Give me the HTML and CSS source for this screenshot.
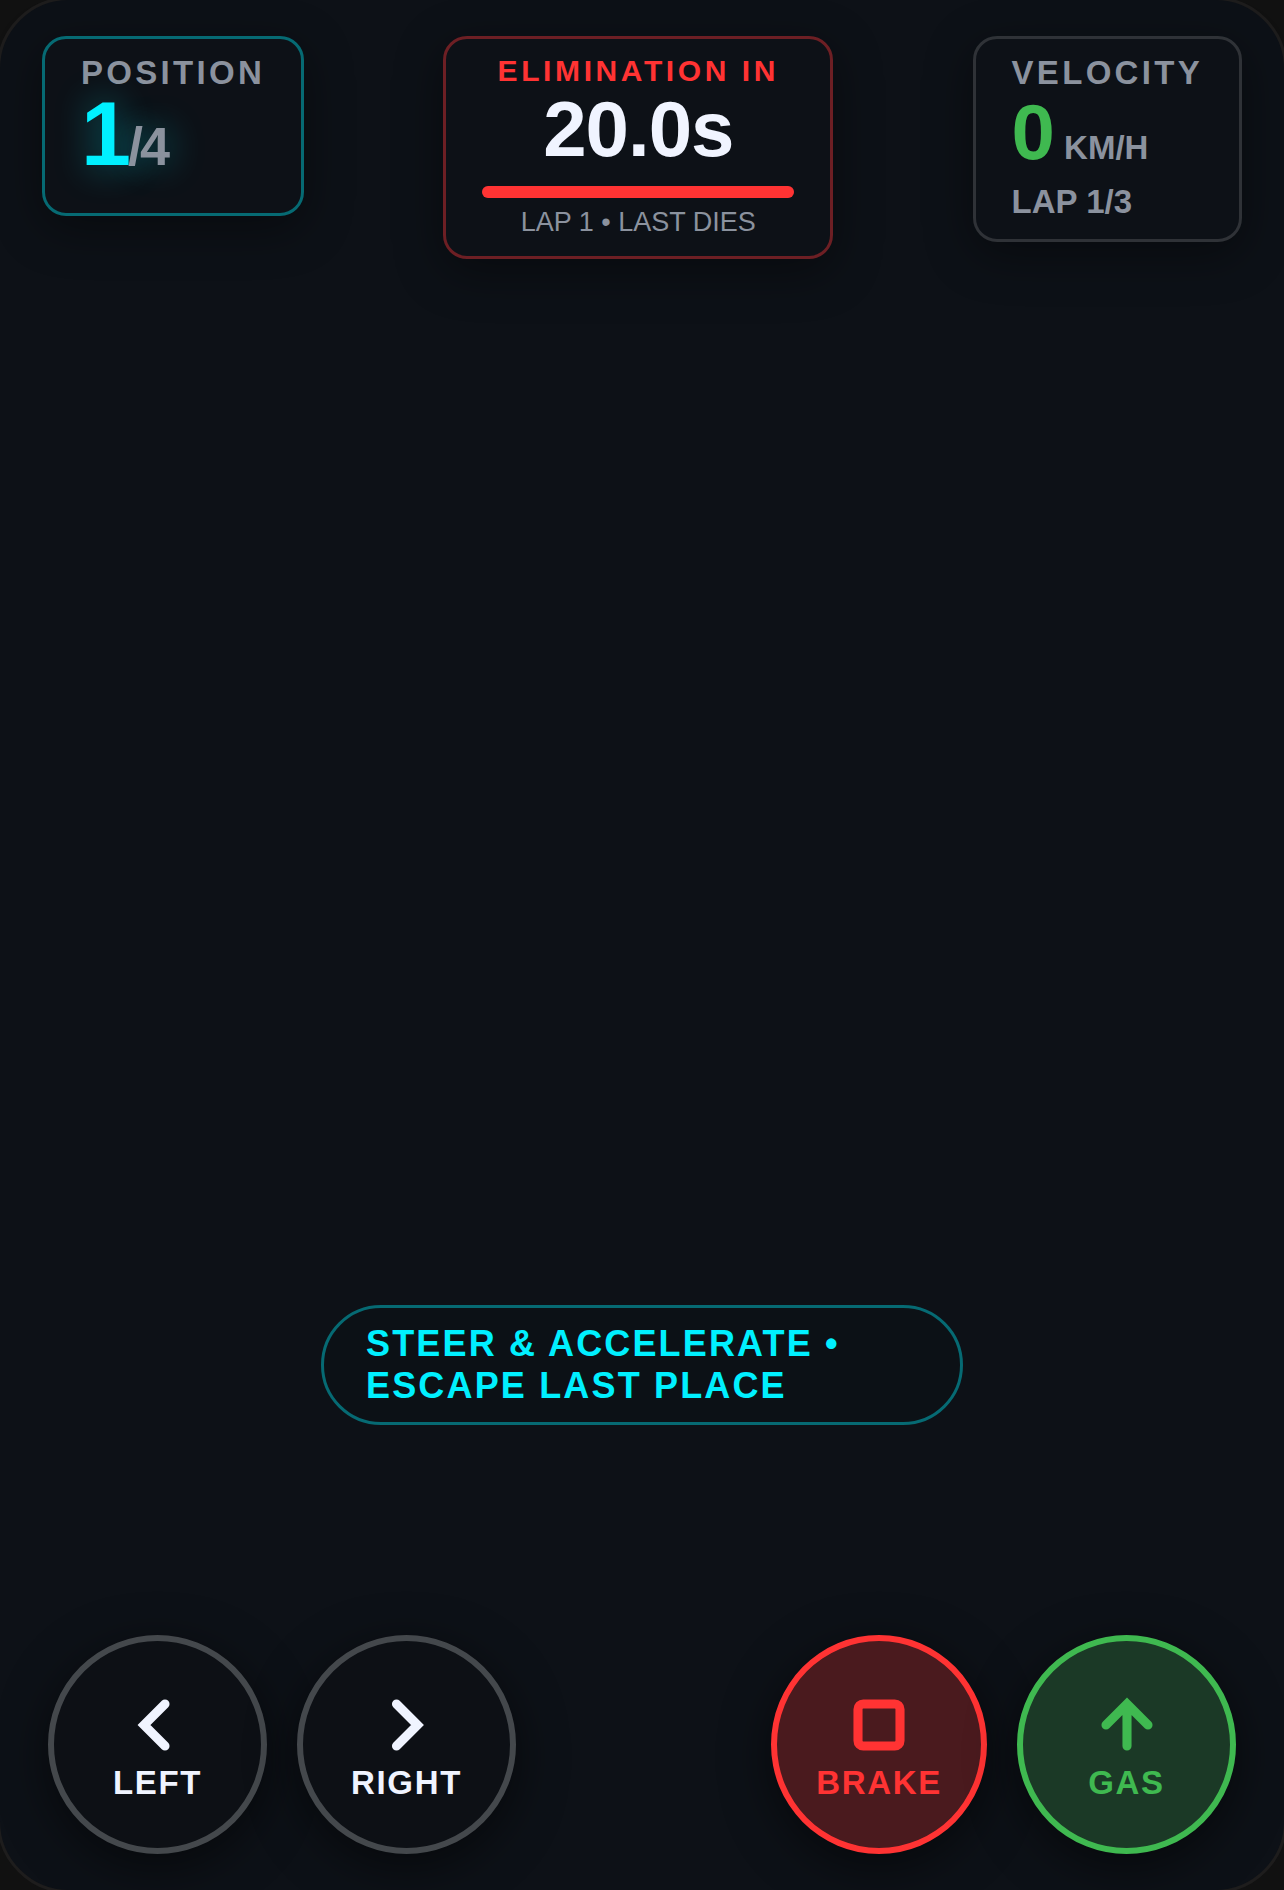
FILE: index.html
```html
<!DOCTYPE html>
<html lang="en">
<head>
    <meta charset="UTF-8">
    <meta name="viewport" content="width=device-width, initial-scale=1.0">
    <title>Elimination Race</title>
    <link rel="stylesheet" href="styles.css">
</head>
<body>

    <main class="game">
        <header class="hud">
            <section class="card card-position">
                <h2 class="label">POSITION</h2>
                <div class="rank">1<span class="rank-total">/4</span></div>
            </section>

            <section class="card card-timer">
                <h2 class="label label-timer">ELIMINATION IN</h2>
                <div class="value">20.0s</div>
                <div class="bar"><div class="bar-fill" style="width: 100%"></div></div>
                <p class="note">LAP 1 • LAST DIES</p>
            </section>

            <section class="card">
                <h2 class="label">VELOCITY</h2>
                <div class="value value-speed">0<span class="unit"> KM/H</span></div>
                <p class="lap">LAP 1/3</p>
            </section>
        </header>

        <p class="hint">STEER &amp; ACCELERATE • ESCAPE LAST PLACE</p>

        <div class="controls">
            <div class="pad">
                <button type="button" class="btn">
                    <svg class="icon" viewBox="0 0 24 24" aria-hidden="true"><path d="M14 6L8 12L14 18"/></svg>
                    LEFT
                </button>
                <button type="button" class="btn">
                    <svg class="icon" viewBox="0 0 24 24" aria-hidden="true"><path d="M9 6L15 12L9 18"/></svg>
                    RIGHT
                </button>
            </div>
            <div class="pad">
                <button type="button" class="btn btn-brake">
                    <svg class="icon" viewBox="0 0 24 24" aria-hidden="true"><rect x="6" y="6" width="12" height="12" rx="1.5"/></svg>
                    BRAKE
                </button>
                <button type="button" class="btn btn-gas">
                    <svg class="icon" viewBox="0 0 24 24" aria-hidden="true"><path d="M12 18V6M6 12L12 6L18 12"/></svg>
                    GAS
                </button>
            </div>
        </div>
    </main>

</body>
</html>
```

FILE: styles.css
```css
* {
    box-sizing: border-box;
    margin: 0;
    padding: 0;
}

body {
    font-family: "Liberation Sans", Arial, sans-serif;
    background-color: #111111;
    color: #f0f4ff;
    overflow: hidden;
}

.game {
    display: flex;
    flex-direction: column;
    min-height: calc(100vh + 6px);
    margin: -3px;
    padding: 36px 42px;
    background-color: #0d1117;
    border: 3px solid #1e1d1d;
    border-radius: 72px;
}

/* top row */
.hud {
    display: flex;
    justify-content: space-between;
    align-items: flex-start;
}

.card {
    min-height: 180px;
    padding: 15px 36px 18px;
    background-color: #0d1117;
    border: 3px solid #2f3237;
    border-radius: 24px;
    box-shadow: 0 12px 48px rgba(0, 0, 0, 0.4);
}

.card-position {
    border-color: #066a73;
}

.card-timer {
    min-width: 390px;
    border-color: #6d1f24;
    text-align: center;
}

.label {
    font-size: 33px;
    line-height: 37px;
    letter-spacing: 0.1em;
    color: #8b929e;
}

.label-timer {
    font-size: 30px;
    line-height: 34px;
    letter-spacing: 0.12em;
    color: #ff3333;
}

.rank {
    font-size: 90px;
    font-weight: bold;
    line-height: 86px;
    letter-spacing: -3px;
    color: #00f0ff;
    text-shadow: 0 0 36px rgba(0, 240, 255, 0.4);
}

.rank-total {
    font-size: 54px;
    line-height: 1;
    color: #8b929e;
}

.value {
    font-size: 78px;
    font-weight: bold;
    line-height: 82px;
    letter-spacing: -1px;
}

.value-speed {
    letter-spacing: normal;
    color: #3fb950;
}

.unit {
    font-size: 33px;
    line-height: 1;
    color: #8b929e;
}

.bar {
    height: 12px;
    margin: 16px 0 9px;
    background-color: #22262c;
    border-radius: 6px;
}

.bar-fill {
    height: 100%;
    background-color: #ff3333;
    border-radius: 6px;
}

.note {
    font-size: 27px;
    line-height: 31px;
    color: #8b929e;
}

.lap {
    margin-top: 9px;
    font-size: 33px;
    font-weight: bold;
    line-height: 39px;
    color: #8b929e;
}

/* hint above the controls */
.hint {
    width: 642px;
    max-width: 100%;
    margin: auto auto 210px;
    padding: 15px 42px;
    font-size: 36px;
    font-weight: bold;
    line-height: 42px;
    letter-spacing: 0.06em;
    color: #00f0ff;
    background-color: #0c1116;
    border: 3px solid #066a73;
    border-radius: 60px;
}

/* touch controls */
.controls {
    display: flex;
    justify-content: space-between;
    padding: 0 6px;
}

.pad {
    display: flex;
    gap: 30px;
}

.btn {
    display: flex;
    flex-direction: column;
    align-items: center;
    justify-content: center;
    width: 219px;
    height: 219px;
    padding-bottom: 8px;
    font-family: inherit;
    font-size: 33px;
    font-weight: bold;
    line-height: 31px;
    letter-spacing: 0.05em;
    color: #f0f4ff;
    background-color: #0d1015;
    border: 6px solid #44484c;
    border-radius: 50%;
    box-shadow: 0 12px 48px rgba(0, 0, 0, 0.5);
    cursor: pointer;
}

.btn-brake {
    width: 216px;
    color: #ff3333;
    background-color: #4a1a1e;
    border-color: #ff3333;
}

.btn-gas {
    color: #3fb950;
    background-color: #1b3926;
    border-color: #3fb950;
}

.icon {
    width: 84px;
    height: 84px;
    fill: none;
    stroke: currentColor;
    stroke-width: 2.6;
    stroke-linecap: round;
}
```
